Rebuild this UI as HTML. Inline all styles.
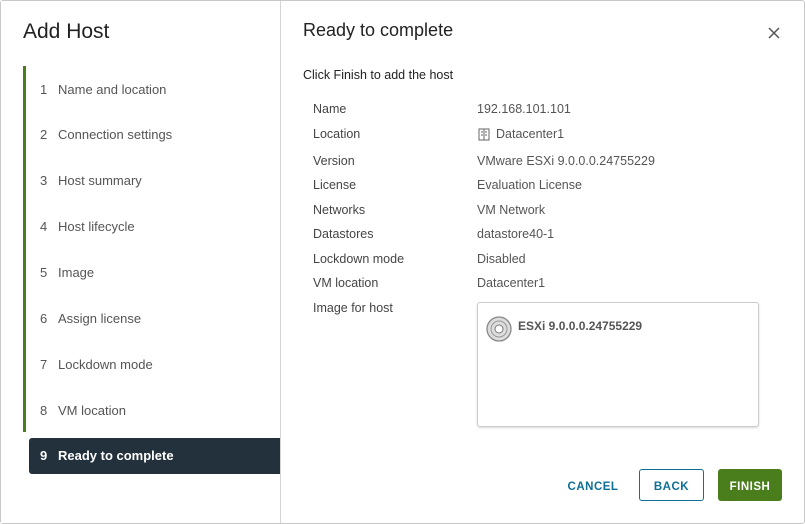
<!DOCTYPE html>
<html><head><style>
*{margin:0;padding:0;box-sizing:border-box}
body{width:805px;height:524px;background:#fff;font-family:"Liberation Sans",sans-serif;position:relative;overflow:hidden;color:#333}
.frame{position:absolute;left:0;top:0;width:805px;height:524px;border:1px solid #c8c8c8;border-radius:3px}
.side{position:absolute;left:1px;top:1px;width:280px;height:522px;background:#fff;border-right:1px solid #d4d4d4}
h1{position:absolute;left:23px;top:20px;font-size:21px;font-weight:normal;color:#222}
.bar{position:absolute;left:23px;top:66px;width:3px;height:366px;background:#4a7d1c}
.step{position:absolute;left:40px;font-size:13px;color:#555}
.step span{display:inline-block;width:18px}
.active{position:absolute;left:29px;top:438px;width:251px;height:36px;background:#22313b;border-radius:3px 0 0 3px;color:#fff;font-size:13px;font-weight:bold;padding:10px 0 0 11px}
.active span{display:inline-block;width:18px}
h2{position:absolute;left:303px;top:20px;font-size:18px;font-weight:normal;color:#222}
.x{position:absolute;left:767px;top:26px}
.sub{position:absolute;left:303px;top:68px;font-size:12.5px;color:#222}
.k{position:absolute;left:313px;font-size:12.5px;color:#444;margin-top:1px}
.v{position:absolute;left:477px;font-size:12.5px;color:#555;margin-top:1px}
.box{position:absolute;left:477px;top:302px;width:282px;height:125px;border:1px solid #ccc;border-radius:3px;box-shadow:0 1px 2px rgba(0,0,0,.15)}
.esx{position:absolute;left:518px;top:319px;font-size:12px;font-weight:bold;color:#555}
.btn{position:absolute;top:469px;height:32px;font-size:11.5px;font-weight:bold;letter-spacing:.5px;text-align:center;line-height:36px;border-radius:3px}
</style></head><body>
<div class="frame"></div>
<div class="side"></div>
<h1>Add Host</h1>
<div class="bar"></div>
<div class="step" style="top:82px"><span>1</span>Name and location</div>
<div class="step" style="top:127px"><span>2</span>Connection settings</div>
<div class="step" style="top:173px"><span>3</span>Host summary</div>
<div class="step" style="top:219px"><span>4</span>Host lifecycle</div>
<div class="step" style="top:265px"><span>5</span>Image</div>
<div class="step" style="top:311px"><span>6</span>Assign license</div>
<div class="step" style="top:357px"><span>7</span>Lockdown mode</div>
<div class="step" style="top:403px"><span>8</span>VM location</div>
<div class="active"><span>9</span>Ready to complete</div>
<h2>Ready to complete</h2>
<svg class="x" width="14" height="14" viewBox="0 0 14 14"><path d="M2 2L12 12M12 2L2 12" stroke="#555" stroke-width="1.5"/></svg>
<div class="sub">Click Finish to add the host</div>
<div class="k" style="top:101px">Name</div><div class="v" style="top:101px">192.168.101.101</div>
<div class="k" style="top:126px">Location</div>
<svg style="position:absolute;left:478px;top:128px" width="12" height="13" viewBox="0 0 12 13"><rect x="1" y="1" width="10" height="11" fill="none" stroke="#666"/><path d="M6 1V12M3 4h2M3 7h2M7 4h2M7 7h2" stroke="#666"/></svg>
<div class="v" style="top:126px;left:496px">Datacenter1</div>
<div class="k" style="top:153px">Version</div><div class="v" style="top:153px">VMware ESXi 9.0.0.0.24755229</div>
<div class="k" style="top:177px">License</div><div class="v" style="top:177px">Evaluation License</div>
<div class="k" style="top:202px">Networks</div><div class="v" style="top:202px">VM Network</div>
<div class="k" style="top:226px">Datastores</div><div class="v" style="top:226px">datastore40-1</div>
<div class="k" style="top:251px">Lockdown mode</div><div class="v" style="top:251px">Disabled</div>
<div class="k" style="top:275px">VM location</div><div class="v" style="top:275px">Datacenter1</div>
<div class="k" style="top:300px">Image for host</div>
<div class="box"></div>
<svg style="position:absolute;left:486px;top:316px" width="26" height="26" viewBox="0 0 26 26"><circle cx="13" cy="13" r="12" fill="#ddd" stroke="#888" stroke-width="1.3"/><circle cx="13" cy="13" r="8" fill="none" stroke="#999"/><circle cx="13" cy="13" r="4" fill="#fff" stroke="#777"/></svg>
<div class="esx">ESXi 9.0.0.0.24755229</div>
<div class="btn" style="left:559px;width:68px;color:#0e6f96">CANCEL</div>
<div class="btn" style="left:639px;width:65px;border:1px solid #0e6f96;color:#0e6f96;line-height:34px">BACK</div>
<div class="btn" style="left:718px;width:64px;background:#4a7d1c;color:#fff">FINISH</div>
</body></html>
